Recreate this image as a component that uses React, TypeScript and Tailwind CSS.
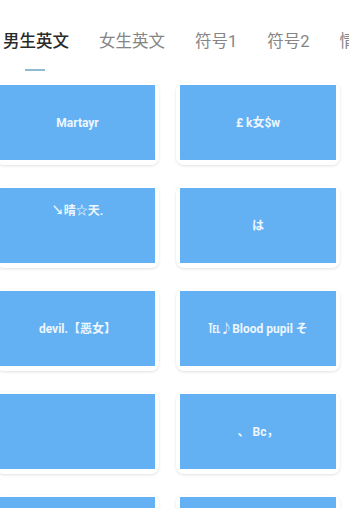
// Nickname picker: category tabs on top, two-column grid of name cards below.
const TABS = ['男生英文', '女生英文', '符号1', '符号2', '情侣'];

interface Nick {
  text: string;
  lift?: boolean;
}

const NICKS: Nick[] = [
  { text: 'Martayr' },
  { text: '£ k女$w' },
  { text: '↘晴☆天.', lift: true },
  { text: 'は' },
  { text: 'devil.【恶女】' },
  { text: '℡♪Blood pupil そ' },
  { text: '' },
  { text: '、 Bc，' },
  { text: '' },
  { text: '' },
];

function NickCard({ nick }: { nick: Nick }) {
  return (
    <div className="rounded-lg bg-white pt-[2px] px-[4px] pb-[5px] shadow-[0_1px_3px_rgba(0,0,0,0.12)]">
      <div className="h-[75px] bg-[#63b1f3] flex items-center justify-center">
        <span
          className={`text-[12px] font-bold text-[#eef6fe] whitespace-nowrap ${nick.lift ? 'mb-[30px]' : ''}`}
        >
          {nick.text}
        </span>
      </div>
    </div>
  );
}

export default function App() {
  return (
    <div
      className="w-[349px] h-[508px] overflow-hidden bg-white"
      style={{ fontFamily: "Roboto, 'Noto Sans CJK SC', sans-serif" }}
    >
      <div className="pt-[30px]">
        <div className="flex gap-[30px] pl-[3px] whitespace-nowrap overflow-hidden">
          {TABS.map((t, i) => (
            <span
              key={t}
              className={`text-[16.5px] leading-[24px] shrink-0 ${i === 0 ? 'text-[#2a2a2a] font-medium' : 'text-[#858585]'}`}
            >
              {t}
            </span>
          ))}
        </div>
        <div className="mt-[15px] ml-[25px] w-[20px] h-[2px] bg-[#8fbcd3]" />
      </div>

      <div className="mt-[12px] -ml-[4px] w-[348px] grid grid-cols-[163px_164px] gap-x-[17px] gap-y-[21px]">
        {NICKS.map((n, i) => (
          <NickCard key={i} nick={n} />
        ))}
      </div>
    </div>
  );
}
